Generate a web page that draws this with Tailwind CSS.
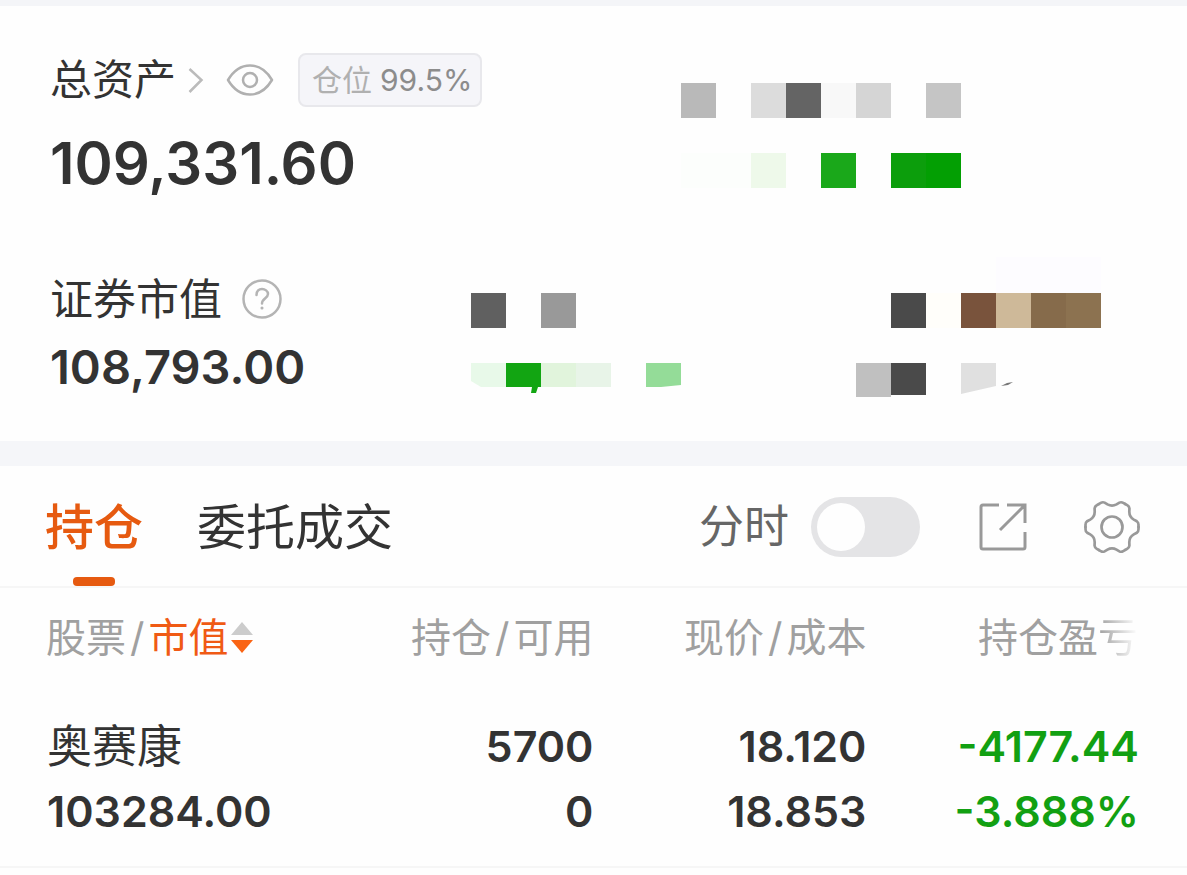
<!DOCTYPE html>
<html lang="zh-CN">
<head>
<meta charset="utf-8">
<meta name="viewport" content="width=device-width, initial-scale=1">
<title>持仓</title>
<script src="https://cdn.jsdelivr.net/npm/@tailwindcss/browser@4"></script>
</head>
<body class="min-h-screen border-t-6 border-[#f4f5f8] bg-[#fefefe] font-[Inter,'Noto_Sans_CJK_SC',sans-serif] text-[#333333]">
<main>
  <section class="pt-[47px] pb-10 pl-[50px]" aria-label="资产">
    <div class="grid grid-cols-[631fr_506fr]">
      <div>
        <div class="flex h-[54px] items-center">
          <a href="#" class="flex items-center text-[42px] leading-[54px]">总资产
            <svg class="ml-3 h-7 w-4" viewBox="0 0 16 28" fill="none" stroke="#bbbbbb" stroke-width="2.5" aria-hidden="true"><path d="M1.500 3L13.500 14L1.500 26"/></svg>
          </a>
          <button type="button" aria-label="隐藏金额" class="ml-[22px]">
            <svg class="h-8 w-12" viewBox="0 0 48 32" fill="none" stroke="#b0b0b0" stroke-width="2.500" stroke-linejoin="round"><path d="M2 16C8 6 16 1.500 24 1.500S40 6 46 16C40 26 32 30.500 24 30.500S8 26 2 16Z"/><circle cx="24" cy="16" r="7"/></svg>
          </button>
          <span class="ml-6 flex h-[54px] items-center gap-2 rounded-lg border-2 border-[#e8e8ec] bg-[#f5f5f9] pr-2 pl-3 text-[30px] text-[#b0b0b0]">仓位 <span class="text-[#8c8c8c]">99.5%</span></span>
        </div>
        <p class="mt-[26px] text-[58px] leading-[60px] font-semibold">109,331.60</p>
      </div>
      <svg class="mt-[30px] h-[105px] w-[280px]" viewBox="0 0 280 105" shape-rendering="crispEdges" aria-hidden="true">
        <path fill="#b9b9b9" d="M0 0h35v35H0z"/><path fill="#dcdcdc" d="M70 0h35v35H70z"/><path fill="#646464" d="M105 0h35v35h-35z"/><path fill="#f8f8f8" d="M140 0h35v35h-35z"/><path fill="#d5d5d5" d="M175 0h35v35h-35z"/><path fill="#c5c5c5" d="M245 0h35v35h-35z"/>
        <path fill="#fcfefc" d="M0 70h70v35H0z"/><path fill="#eef9ea" d="M70 70h35v35H70z"/><path fill="#1aa81a" d="M140 70h35v35h-35z"/><path fill="#0c9e0c" d="M210 70h35v35h-35z"/><path fill="#039f03" d="M245 70h35v35h-35z"/>
      </svg>
    </div>

    <div class="mt-16 grid grid-cols-[421fr_385fr_331fr]">
      <div class="pt-5">
        <div class="flex h-11 items-center gap-[18px] text-[43px] leading-[44px]">证券市值
          <button type="button" aria-label="说明"><svg class="size-11" viewBox="0 0 44 44" fill="none" stroke="#b4b4b4" stroke-width="2.500" stroke-linecap="round"><circle cx="22" cy="22" r="18.500"/><path d="M16.500 18C16.500 14 19 12 22 12S28 14 28 17C28 21 22 21.500 22 26.500"/><circle cx="22" cy="31" r="0.800" fill="#b4b4b4" stroke-width="1.500"/></svg></button>
        </div>
        <p class="mt-[21px] text-[47px] leading-[50px] font-semibold">108,793.00</p>
      </div>
      <svg class="mt-9 h-[105px] w-[245px]" viewBox="0 0 245 105" aria-hidden="true">
        <path fill="#606060" d="M0 0h35v35H0z"/><path fill="#999999" d="M70 0h35v35H70z"/>
        <path fill="#e8f9e9" d="M0 70h35v24H10L0 88z"/><path fill="#12a512" d="M35 70h35v24h-3l-2 6h-5l1-6H35z"/><path fill="#e1f4dc" d="M70 70h35v24H70z"/><path fill="#e8f4e8" d="M105 70h35v24h-35z"/><path fill="#94dc98" d="M175 70h35v22l-20 2h-15z"/>
      </svg>
      <svg class="h-36 w-[245px]" viewBox="0 0 245 144" aria-hidden="true">
        <path fill="#fdfcff" d="M140 0h105v36H140z"/>
        <path fill="#4a4a4a" d="M35 36h35v35H35z"/><path fill="#fffefa" d="M70 36h35v35H70z"/><path fill="#79533c" d="M105 36h35v35h-35z"/><path fill="#ceb999" d="M140 36h35v35h-35z"/><path fill="#866b4b" d="M175 36h35v35h-35z"/><path fill="#8c7250" d="M210 36h35v35h-35z"/>
        <path fill="#c0c0c0" d="M0 106h35v34H0z"/><path fill="#4a4a4a" d="M35 106h35v32H35z"/><path fill="#e0e0e0" d="M105 106h35v23l-35 8z"/><path fill="#777777" d="M145 129l6-3 6-1-5 3z"/>
      </svg>
    </div>
  </section>

  <div class="h-[25px] bg-[#f5f6f9]"></div>

  <section aria-label="持仓">
    <div class="flex h-[122px] items-stretch justify-between border-b-2 border-[#f6f6f6] pr-[47px] pl-[45px]">
      <nav class="flex gap-[54px] text-[49px] leading-[124px]">
        <a href="#" aria-current="page" class="relative font-medium text-[#e65a10]">持仓<span class="absolute bottom-0 left-1/2 h-[9px] w-[42px] -translate-x-1/2 rounded-sm bg-[#e65a10]"></span></a>
        <a href="#">委托成交</a>
      </nav>
      <div class="flex items-center pt-[2px]">
        <label for="intraday" class="text-[45px] text-[#666666]">分时</label>
        <input id="intraday" type="checkbox" role="switch" class="ml-[22px] h-[60px] w-[109px] appearance-none rounded-full bg-[#e4e4e6] p-[6px] before:block before:size-12 before:rounded-full before:bg-[#fefefe] checked:before:ml-auto">
        <button type="button" aria-label="分享" class="ml-[59px]">
          <svg class="size-12" viewBox="0 0 48 48" fill="none" stroke="#999999" stroke-width="3"><path d="M20 2H4Q2 2 2 4V44Q2 46 4 46H44Q46 46 46 44V29M28 2H46V20M46 2L21 27"/></svg>
        </button>
        <button type="button" aria-label="设置" class="ml-[57px]">
          <svg class="size-14" viewBox="-28 -28 56 56" fill="none" stroke="#999999" stroke-width="2.700" stroke-linecap="round">
            <defs><path id="tooth" d="M26.500 0V2.300Q26.500 4.600 24.800 5.800L21.800 7.400Q17.300 10 17.300 15.200L17.400 18.600Q17.200 20.700 15.200 21.800L13.250 22.950"/></defs>
            <use href="#tooth"/><use href="#tooth" transform="rotate(60)"/><use href="#tooth" transform="rotate(120)"/><use href="#tooth" transform="rotate(180)"/><use href="#tooth" transform="rotate(240)"/><use href="#tooth" transform="rotate(300)"/>
            <circle r="10.500"/>
          </svg>
        </button>
      </div>
    </div>

    <table class="w-full table-fixed border-b-2 border-[#f6f6f6]">
      <colgroup><col class="w-[27%]"><col class="w-[23%]"><col class="w-[23%]"><col class="w-[27%]"></colgroup>
      <thead class="text-[40px] leading-[60px] whitespace-nowrap text-[#a0a0a0]">
        <tr class="h-[100px]">
          <th scope="col" class="pl-[46px] text-left font-normal">
            <span class="flex items-center">股票<span class="px-1">/</span><button type="button" class="flex items-center gap-[2px] text-[#f05a14]">市值<svg class="h-8 w-6" viewBox="0 0 24 32" aria-hidden="true"><path fill="#cccccc" d="M12 0L23 13H1z"/><path fill="#fa6414" d="M1 18H23L12 31z"/></svg></button></span>
          </th>
          <th scope="col" class="text-right font-normal">持仓<span class="px-1">/</span>可用</th>
          <th scope="col" class="text-right font-normal">现价<span class="px-1">/</span>成本</th>
          <th scope="col" class="pr-[49px] text-right font-normal">持仓盈<span class="bg-linear-to-r from-[#a0a0a0] to-white bg-clip-text text-transparent">亏</span></th>
        </tr>
      </thead>
      <tbody class="text-[43px] leading-[65px] font-semibold">
        <tr>
          <th scope="row" class="pt-[26px] pb-[22px] pl-[47px] text-left align-top font-semibold"><span class="block text-[45px] font-normal">奥赛康</span><span class="block">103284.00</span></th>
          <td class="pt-[26px] pb-[22px] text-right align-top">5700<br>0</td>
          <td class="pt-[26px] pb-[22px] text-right align-top">18.120<br>18.853</td>
          <td class="pt-[26px] pb-[22px] pr-12 text-right align-top text-[#12a012]">-4177.44<br>-3.888%</td>
        </tr>
      </tbody>
    </table>
  </section>
</main>
</body>
</html>
